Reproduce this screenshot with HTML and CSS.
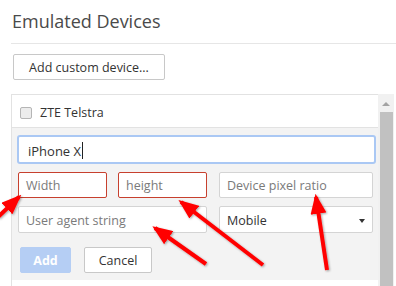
FILE: index.html
```html
<!DOCTYPE html>
<html>
<head>
	<meta charset="UTF-8">
	<title>Emulated Devices</title>
	<link rel="stylesheet" href="styles.css">
</head>
<body>

	<h2 class="title">Emulated Devices</h2>
	<div class="sep"></div>

	<button class="btn add-custom">Add custom device...</button>

	<div class="panel-wrap">
		<div class="panel">
			<div class="device-row">
				<span class="check"></span>
				<span>ZTE Telstra</span>
			</div>
			<div class="editor">
				<div class="name-input">iPhone X<span class="caret"></span></div>
				<div class="fields">
					<div class="field w-small error">Width</div>
					<div class="field w-small error">height</div>
					<div class="field w-big">Device pixel ratio</div>
				</div>
				<div class="fields">
					<div class="field w-ua">User agent string</div>
					<div class="field w-big select">Mobile<span class="arrow"></span></div>
				</div>
				<div class="buttons">
					<button class="btn btn-add">Add</button>
					<button class="btn btn-cancel">Cancel</button>
				</div>
			</div>
		</div>
		<div class="scrollbar">
			<div class="scroll-up"></div>
			<div class="thumb"></div>
		</div>
	</div>

	<!-- 赤い矢印 -->
	<svg class="arrows" width="396" height="286" viewBox="0 0 396 286">
		<defs>
			<marker id="head" markerWidth="5" markerHeight="4" refX="4.2" refY="2" orient="auto" markerUnits="strokeWidth">
				<path d="M0,0 L5,2 L0,4 Z" fill="#f00"/>
			</marker>
			<filter id="shadow" x="-20%" y="-20%" width="140%" height="140%">
				<feDropShadow dx="1" dy="1" stdDeviation="1" flood-opacity="0.35"/>
			</filter>
		</defs>
		<g stroke="#f00" stroke-width="4" filter="url(#shadow)" marker-end="url(#head)">
			<line x1="-2" y1="217" x2="19" y2="197"/>
			<line x1="263" y1="265" x2="181" y2="202"/>
			<line x1="206" y1="264" x2="155" y2="228"/>
			<line x1="327" y1="270" x2="316" y2="197"/>
		</g>
	</svg>

</body>
</html>
```

FILE: styles.css
```css
html, body {
	margin: 0;
	height: 100%;
	overflow: hidden;
}

body {
	background: #fff;
	font-family: "Open Sans", "Liberation Sans", sans-serif;
	color: #333;
	padding: 0 0 0 11px;
	position: relative;
}

.title {
	margin: 0;
	padding: 9px 0 0 1px;
	height: 36px;
	box-sizing: border-box;
	font-size: 18px;
	font-weight: normal;
	color: #4a4a4a;
}

.sep {
	height: 1px;
	background: #e6e6e6;
	margin-top: 7px;
}

.btn {
	font-family: inherit;
	font-size: 12.5px;
	color: #333;
	background: #fff;
	border: 1px solid #c8c8c8;
	border-radius: 2px;
	padding: 0;
	cursor: pointer;
}

.add-custom {
	margin: 10px 0 0 2px;
	width: 152px;
	height: 26px;
}

/* ここから一覧 */
.panel-wrap {
	display: flex;
	margin-top: 14px;
}

.panel {
	width: 367px;
	border: 1px solid #e2e2e2;
	border-right: none;
	box-sizing: border-box;
}

.device-row {
	height: 33px;
	display: flex;
	align-items: center;
	font-size: 12.5px;
	border-bottom: 1px solid #e2e2e2;
	padding: 3px 0 0 8px;
	box-sizing: border-box;
}

.check {
	width: 10px;
	height: 10px;
	border: 1px solid #b5b5b5;
	border-radius: 2px;
	background: #ececec;
	margin-right: 8px;
}

.editor {
	background: #f3f3f3;
	padding: 7px 2px 7px 5px;
	height: 152px;
	box-sizing: border-box;
}

.name-input {
	height: 29px;
	box-sizing: border-box;
	border: 2px solid #aac8f4;
	border-radius: 3px;
	background: #fff;
	font-size: 13px;
	color: #333;
	padding: 5px 0 0 9px;
	display: flex;
	align-items: flex-start;
}

.caret {
	width: 1px;
	height: 17px;
	background: #222;
	margin-left: 1px;
}

.fields {
	display: flex;
	margin-top: 8px;
	padding-left: 1px;
}

.field {
	height: 26px;
	box-sizing: border-box;
	border: 1px solid #d4d4d4;
	border-radius: 2px;
	background: #fff;
	font-size: 12.5px;
	color: #7a7a7a;
	padding: 4px 0 0 7px;
	margin-right: 11px;
}

.fields + .fields .field {
	height: 27px;
	padding-top: 5px;
}

.field.error {
	border-color: #c7402e;
}

.w-small {
	width: 89px;
}

.w-small + .w-small {
	margin-right: 12px;
}

.w-ua {
	width: 189px;
	margin-right: 12px;
}

.w-big {
	width: 154px;
	margin-right: 0;
}

.select {
	color: #333;
	position: relative;
}

.arrow {
	position: absolute;
	right: 7px;
	top: 12px;
	border-left: 3.5px solid transparent;
	border-right: 3.5px solid transparent;
	border-top: 4px solid #333;
}

.buttons {
	display: flex;
	margin-top: 14px;
	padding-left: 3px;
}

.btn-add {
	width: 51px;
	height: 26px;
	background: #b5cef4;
	border-color: #b5cef4;
	color: #fff;
	font-weight: bold;
	margin-right: 13px;
}

.btn-cancel {
	width: 68px;
	height: 26px;
}

/* スクロールバー */
.scrollbar {
	width: 16px;
	height: 200px;
	background: #f1f1f1;
	display: flex;
	flex-direction: column;
	align-items: center;
}

.scroll-up {
	margin-top: 8px;
	border-left: 4px solid transparent;
	border-right: 4px solid transparent;
	border-bottom: 4px solid #a3a3a3;
}

.thumb {
	width: 13px;
	margin-top: 6px;
	margin-left: 1px;
	flex: 1;
	background: #c1c1c1;
}

.arrows {
	position: absolute;
	left: 0;
	top: 0;
	pointer-events: none;
}
```
